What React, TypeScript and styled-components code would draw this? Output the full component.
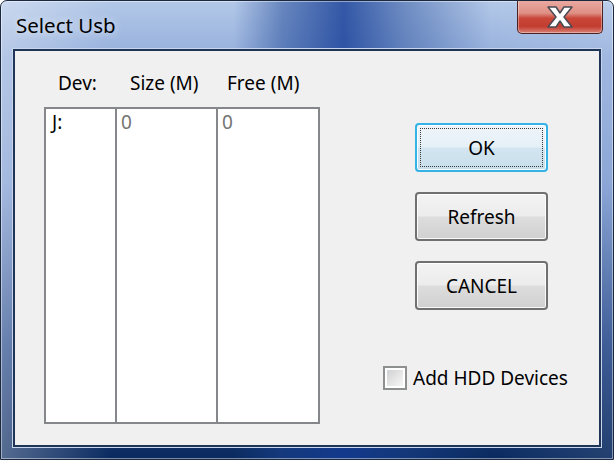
import React from "react"
import styled, { createGlobalStyle } from "styled-components"

const GlobalStyle = createGlobalStyle`
  html, body {
    margin: 0;
    padding: 0;
    background: #ffffff;
  }
  body {
    font-family: "Noto Sans", "Open Sans", "DejaVu Sans", sans-serif;
  }
`

const Window = styled.div`
  position: relative;
  width: 614px;
  height: 460px;
  box-sizing: border-box;
  display: flex;
  flex-direction: column;
  border: 1px solid #1b2940;
  border-radius: 7px 7px 0 0;
  overflow: hidden;
  background:
    linear-gradient(
      90deg,
      rgba(255, 255, 255, 0.3) 0%,
      rgba(255, 255, 255, 0) 18%,
      rgba(255, 255, 255, 0) 38%,
      rgba(30, 70, 150, 0.5) 46%,
      rgba(20, 60, 150, 0.8) 56%,
      rgba(30, 70, 150, 0.45) 66%,
      rgba(255, 255, 255, 0) 80%,
      rgba(255, 255, 255, 0.1) 100%
    ),
    linear-gradient(180deg, #b3c8e8 0%, #96b0dc 12%, #7f9dd2 40%, #2a4c8c 75%, #0a2a5f 100%);
  box-shadow: inset 0 0 0 1px rgba(255, 255, 255, 0.45);
`

const TitleBar = styled.div`
  height: 47px;
  display: flex;
  align-items: flex-start;
  justify-content: space-between;
  padding-left: 15px;
  flex-shrink: 0;
`

const Title = styled.span`
  margin-top: 11px;
  font-size: 20.5px;
  line-height: 26px;
  color: #000000;
  text-shadow: 0 0 8px rgba(255, 255, 255, 0.8);
`

const CloseButton = styled.div`
  width: 86px;
  height: 34px;
  margin-top: -1px;
  margin-right: 10px;
  box-sizing: border-box;
  border: 1px solid #4b2222;
  border-top: none;
  border-radius: 0 0 5px 5px;
  display: flex;
  align-items: center;
  justify-content: center;
  background: linear-gradient(180deg, #e9aba2 0%, #df8f84 40%, #c9473a 55%, #c23d30 80%, #d98276 100%);
  box-shadow: inset 0 0 0 1px rgba(255, 255, 255, 0.35);
`

const ClientFrame = styled.div`
  flex: 1;
  margin: 0 11px 11px 11px;
  border: 1px solid #c7d6ec;
  display: flex;
`

const Client = styled.div`
  flex: 1;
  border: 2px solid #1f3457;
  background: #f0f0f0;
  display: flex;
  color: #000000;
  font-size: 19px;
`

const LeftPane = styled.div`
  margin-left: 29px;
  padding-top: 19px;
  display: flex;
  flex-direction: column;
`

const HeaderRow = styled.div`
  display: grid;
  grid-template-columns: 73px 101px 102px;
  height: 37px;
  line-height: 26px;
`

const HeaderCell = styled.div<{ $indent: number }>`
  padding-left: ${(p) => p.$indent}px;
  white-space: nowrap;
`

const ListBox = styled.div`
  width: 276px;
  height: 317px;
  box-sizing: border-box;
  border: 2px solid #86878b;
  background: #ffffff;
  display: grid;
  grid-template-columns: 71px 101px 100px;
`

const ListColumn = styled.div<{ $last?: boolean }>`
  border-right: ${(p) => (p.$last ? "none" : "2px solid #86878b")};
  padding: 1px 0 0 4px;
  line-height: 24px;
`

const Cell = styled.div<{ $dim?: boolean; $indent?: number }>`
  color: ${(p) => (p.$dim ? "#747474" : "#000000")};
  padding-left: ${(p) => p.$indent ?? 0}px;
`

const RightPane = styled.div`
  margin-left: 63px;
  padding-top: 72px;
  width: 165px;
  display: flex;
  flex-direction: column;
`

const Button = styled.div<{ $default?: boolean }>`
  position: relative;
  align-self: flex-end;
  width: 133px;
  height: 49px;
  box-sizing: border-box;
  margin-bottom: 20px;
  border: 2px solid ${(p) => (p.$default ? "#35b2e6" : "#707070")};
  border-radius: 4px;
  display: flex;
  align-items: center;
  justify-content: center;
  font-size: 19px;
  background: ${(p) =>
    p.$default
      ? "linear-gradient(180deg, #eef5fa 0%, #e6f0f7 48%, #d2e5f0 52%, #c8dfeb 100%)"
      : "linear-gradient(180deg, #f3f3f3 0%, #ececec 48%, #dddddd 52%, #d0d0d0 100%)"};
  box-shadow: inset 0 0 0 1px rgba(255, 255, 255, 0.85);
`

const FocusRing = styled.div`
  position: absolute;
  inset: 3px;
  border: 1px dotted #3a3a3a;
  pointer-events: none;
`

const CheckRow = styled.label`
  margin-top: 35px;
  display: flex;
  align-items: center;
  gap: 6px;
  white-space: nowrap;
  font-size: 19px;
`

const CheckBox = styled.div`
  width: 24px;
  height: 24px;
  box-sizing: border-box;
  border: 2px solid #8e8f8f;
  background: #ffffff;
  padding: 2px;
  flex-shrink: 0;
`

const CheckInner = styled.div`
  width: 100%;
  height: 100%;
  background: linear-gradient(135deg, #cfd0d2 0%, #e6e6e6 55%, #f6f6f6 100%);
`

const CloseGlyph = () => (
  <svg width="32" height="24" viewBox="0 0 32 24">
    <path
      d="M4 2 H12 L16 8 L20 2 H28 L20 12 L28 22 H20 L16 16 L12 22 H4 L12 12 Z"
      fill="#ffffff"
      stroke="#4a4a55"
      strokeWidth="1.5"
      strokeLinejoin="round"
    />
  </svg>
)

export default function App() {
  return (
    <>
      <GlobalStyle />
      <Window>
        <TitleBar>
          <Title>Select Usb</Title>
          <CloseButton>
            <CloseGlyph />
          </CloseButton>
        </TitleBar>
        <ClientFrame>
          <Client>
            <LeftPane>
              <HeaderRow>
                <HeaderCell $indent={14}>Dev:</HeaderCell>
                <HeaderCell $indent={13}>Size (M)</HeaderCell>
                <HeaderCell $indent={9}>Free (M)</HeaderCell>
              </HeaderRow>
              <ListBox>
                <ListColumn>
                  <Cell $indent={2}>J:</Cell>
                </ListColumn>
                <ListColumn>
                  <Cell $dim>0</Cell>
                </ListColumn>
                <ListColumn $last>
                  <Cell $dim>0</Cell>
                </ListColumn>
              </ListBox>
            </LeftPane>
            <RightPane>
              <Button $default>
                <FocusRing />
                OK
              </Button>
              <Button>Refresh</Button>
              <Button>CANCEL</Button>
              <CheckRow>
                <CheckBox>
                  <CheckInner />
                </CheckBox>
                Add HDD Devices
              </CheckRow>
            </RightPane>
          </Client>
        </ClientFrame>
      </Window>
    </>
  )
}
